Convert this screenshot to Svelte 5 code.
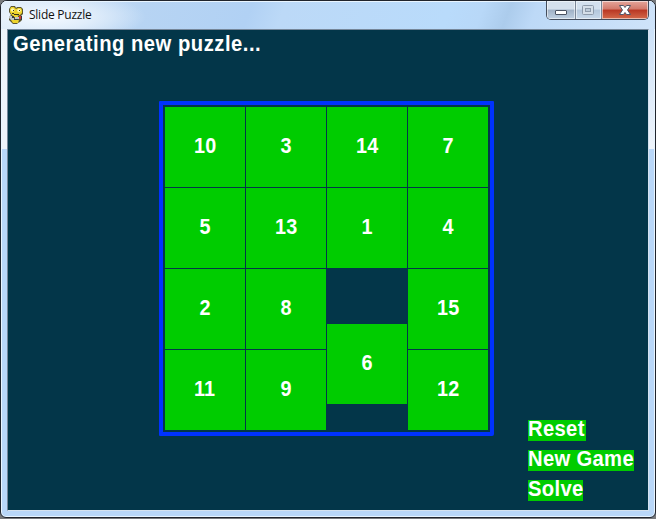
<script>
  const tiles = [10, 3, 14, 7, 5, 13, 1, 4, 2, 8, 6, 15, 11, 9, null, 12];
  const slide = 55;
  const actions = [
    { label: 'Reset', width: 58 },
    { label: 'New Game', width: 106 },
    { label: 'Solve', width: 55 }
  ];
</script>

<div class="desktop">
  <div class="window">
    <header>
      <svg class="logo" width="16" height="18" viewBox="0 0 16 18">
        <path fill="#5b5530" d="M3 0h4l1 2 1-1h4l2 2v5l-2 2 1 2v2l-2 2-2 1-1 1H5l-2-2-2-2v-3l2-2-2-3V3z" />
        <path fill="#edd32c" d="M3 1h3l2 2 2-1h3l1 2v3l-2 2-3 1H5L3 8 2 6V3zM3 14h8l-1 3H5z" />
        <circle cx="4.700" cy="4" r="1.800" fill="#fff7b0" />
        <circle cx="11" cy="4.500" r="1.800" fill="#fff7b0" />
        <path fill="#3c351b" d="M5 4h1v1H5zM11 4h1v1h-1zM4 7h2v1H4zM6 8h5v1H6z" />
        <path fill="#bfc5c8" d="M1 10h3v2h2v2H3l-2-2zM7 11h4v2H7z" />
        <path fill="#363b3d" d="M4 10h2v2H4zM6 13h4v1H6zM13 10h1v4h-1z" />
        <path fill="#cf3932" d="M11 10h2v3h-2z" />
        <path fill="#edd32c" d="M6 10h4v1H6zM5 14h4v3H5z" />
      </svg>
      <span class="title">Slide Puzzle</span>
      <div class="controls">
        <button class="min" aria-label="Minimize">
          <svg width="28" height="18" viewBox="0 0 28 18"><rect x="8.500" y="9.500" width="11" height="4" rx="0.500" fill="#fff" stroke="#4b5362" /></svg>
        </button>
        <button class="max" aria-label="Maximize">
          <svg width="25" height="18" viewBox="0 0 25 18" fill="#d5dfe9" stroke="#8e9bab"><rect x="6.500" y="4.500" width="11" height="9" rx="1" /><rect x="9.500" y="7.500" width="5" height="3" fill="#bdcbd9" /></svg>
        </button>
        <button class="close" aria-label="Close">
          <svg width="46" height="18" viewBox="0 0 46 18"><path d="M17.500 4.500h4l1.500 2 1.500-2h4l-3 4.500 3 4.500h-4l-1.500-2-1.500 2h-4l3-4.500z" fill="#fff" stroke="#535666" stroke-linejoin="round" /></svg>
        </button>
      </div>
    </header>
    <main>
      <p class="message">Generating new puzzle...</p>
      <div class="board">
        {#each tiles as n, i}
          {#if n === null}
            <span></span>
          {:else}
            <div class="tile" style:transform={i === 10 ? `translateY(${slide}px)` : null}><span>{n}</span></div>
          {/if}
        {/each}
      </div>
      <nav>
        {#each actions as a}
          <button style:width="{a.width}px"><span>{a.label}</span></button>
        {/each}
      </nav>
    </main>
  </div>
</div>

<style>
  .desktop {
    width: 656px;
    height: 519px;
    background: #77797c;
    overflow: hidden;
  }
  .window {
    box-sizing: border-box;
    width: 656px;
    height: 518px;
    border: 1px solid #20242c;
    border-radius: 7px 7px 6px 6px;
    box-shadow: inset 0 0 0 1px #e9f5ff;
    background:
      linear-gradient(#eef4fb, #edf3fa) 0 0 / 7px 148px no-repeat,
      linear-gradient(#c5ddf7, #eef4fb) 100% 0 / 7px 148px no-repeat,
      #b9d7f8;
    padding: 0 6px 6px;
    overflow: hidden;
  }
  header {
    display: flex;
    height: 28px;
    margin: 0 -6px;
    padding: 0 6px 0 7px;
    background:
      radial-gradient(ellipse 100px 26px at 45px 16px, #f4f9ff 0%, #e8f2fccc 45%, transparent 100%),
      linear-gradient(110deg, #dbe9f8 0%, #b7d4f3 22%, #b1d1f4 38%, #bcd9f7 43%, #b9dbfb 68%, #b8d8f8 73%, #acccec 77%, #bdd9f7 81%, #cfe3f9 100%);
    box-shadow: inset 0 1px #e9f5ff;
  }
  .logo {
    margin-top: 5px;
    flex: none;
  }
  .title {
    margin: 5px 0 0 5px;
    font: 12px/18px "Open Sans", "Noto Sans", sans-serif;
    letter-spacing: -0.25px;
    color: #111;
    white-space: nowrap;
  }
  .controls {
    display: flex;
    box-sizing: border-box;
    width: 103px;
    height: 19px;
    margin-left: auto;
    border: 1px solid #444d5c;
    border-top: 0;
    border-radius: 0 0 5px 5px;
    overflow: hidden;
  }
  button {
    padding: 0;
    margin: 0;
    border: 0;
    display: block;
  }
  .controls svg {
    display: block;
  }
  .controls button {
    flex: none;
    overflow: hidden;
    box-shadow: inset 0 0 0 1px #ffffff88;
  }
  .min {
    width: 28px;
    background: linear-gradient(#d5e0ec 0 45%, #a0b1c5 50%, #bfd0e2);
  }
  .controls .max {
    width: 27px;
    border-right: 1px solid #7b8798;
    border-left: 1px solid #7b8798;
    background: linear-gradient(#d3e0ee 0 45%, #b4c7dc 50%, #c8d9ea);
  }
  .close {
    width: 46px;
    background: linear-gradient(#e5a69b 0, #d3796b 45%, #b93723 50%, #d46a4b);
  }
  main {
    box-sizing: border-box;
    display: grid;
    grid-template-rows: 71px 335px 1fr;
    width: 642px;
    height: 482px;
    border: 1px solid #76879a;
    border-right-color: #d5e2ef;
    border-bottom-color: #d5e2ef;
    background: #033649;
    font: bold 21.5px "Liberation Sans", Arial, sans-serif;
    color: #fff;
  }
  .message {
    justify-self: start;
    margin: 3px 0 0 5px;
    line-height: 23px;
    letter-spacing: 0.55px;
    white-space: nowrap;
    transform: scaleX(0.94);
    transform-origin: 0 0;
  }
  .board {
    box-sizing: border-box;
    display: grid;
    grid-template-columns: repeat(4, 80px);
    grid-template-rows: repeat(4, 80px);
    gap: 1px;
    width: 335px;
    height: 335px;
    margin-left: 151px;
    padding: 2px;
    border: 4px solid #0032ff;
    border-radius: 1px 1px 2px 1px;
  }
  .tile {
    display: grid;
    place-items: center;
    padding: 0 0 2px;
    box-sizing: border-box;
    background: #00cc00;
    line-height: 22px;
  }
  .tile span {
    transform: scaleX(0.92);
    letter-spacing: 0.2px;
  }
  nav {
    display: flex;
    flex-direction: column;
    align-items: flex-start;
    gap: 9px;
    margin: -16px 0 0 520px;
  }
  nav button {
    height: 21px;
    background: #00cc00;
    color: #fff;
    font: inherit;
    line-height: 19px;
    padding-bottom: 2px;
    text-align: left;
    white-space: nowrap;
  }
  nav span {
    display: block;
    letter-spacing: 0.35px;
    transform: scaleX(0.94);
    transform-origin: 0 0;
  }
</style>
